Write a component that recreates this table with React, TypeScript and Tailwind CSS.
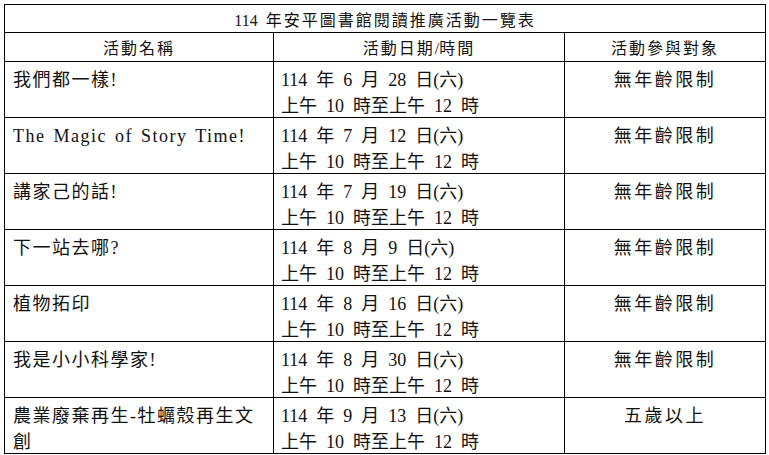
import type { ReactNode } from 'react';

const rows = [
  { name: '我們都一樣!', date: '114 年 6 月 28 日(六)', who: '無年齡限制' },
  { name: 'The Magic of Story Time!', date: '114 年 7 月 12 日(六)', who: '無年齡限制' },
  { name: '講家己的話!', date: '114 年 7 月 19 日(六)', who: '無年齡限制' },
  { name: '下一站去哪?', date: '114 年 8 月 9 日(六)', who: '無年齡限制' },
  { name: '植物拓印', date: '114 年 8 月 16 日(六)', who: '無年齡限制' },
  { name: '我是小小科學家!', date: '114 年 8 月 30 日(六)', who: '無年齡限制' },
  { name: '農業廢棄再生-牡蠣殼再生文\n創', date: '114 年 9 月 13 日(六)', who: '五歲以上' },
];

// serif latin runs; line-height 0 so they never stretch the line box
const latinName = "font-['Liberation_Serif','Noto_Sans_CJK_TC',serif] text-[18px] leading-[0] [word-spacing:2px]";
const latinDate = "font-['Liberation_Serif','Noto_Sans_CJK_TC',serif] text-[18px] leading-[0] [word-spacing:4.5px]";
const latinHead = "font-['Liberation_Serif','Noto_Sans_CJK_TC',serif] text-[16px] leading-[0] tracking-normal [word-spacing:4px]";

function Mixed({ text, latin }: { text: string; latin: string }) {
  const out: ReactNode[] = [];
  text.split('\n').forEach((line, li) => {
    if (li > 0) out.push(<br key={'br' + li} />);
    line.split(/([\x20-\x7e]+)/).forEach((p, i) => {
      if (!p) return;
      if (/^[\x20-\x7e]+$/.test(p)) {
        out.push(
          <span key={li + '-' + i} className={latin}>
            {p}
          </span>
        );
      } else {
        out.push(p);
      }
    });
  });
  return <>{out}</>;
}

export default function App() {
  return (
    <div className="min-h-screen bg-white p-1 font-['Noto_Sans_CJK_TC','Noto_Sans_CJK_SC',sans-serif] text-[#111]">
      <table className="table-fixed border-collapse w-[761px]">
        <colgroup>
          <col className="w-[269px]" />
          <col className="w-[291px]" />
          <col className="w-[201px]" />
        </colgroup>
        <tbody>
          <tr>
            <td colSpan={3} className="h-[28px] border border-black p-0 text-center text-[16px] leading-[20px] tracking-[2px]">
              <Mixed text="114 年安平圖書館閱讀推廣活動一覽表" latin={latinHead} />
            </td>
          </tr>
          <tr>
            {['活動名稱', '活動日期/時間', '活動參與對象'].map((h) => (
              <td key={h} className="h-[29px] border border-black p-0 text-center text-[16px] leading-[20px] tracking-[2px]">
                <Mixed text={h} latin={latinHead} />
              </td>
            ))}
          </tr>
          {rows.map((r, i) => (
            <tr key={i}>
              <td
                className={`${i > 4 ? 'h-[55px]' : 'h-[56px]'} border border-black pl-[8px] pr-1 pt-[3px] align-top text-[18px] leading-[26px] tracking-[1.5px]`}
              >
                <Mixed text={r.name} latin={latinName} />
              </td>
              <td className="border border-black pl-[7px] pt-[3px] align-top text-[18px] leading-[26px]">
                <Mixed text={r.date} latin={latinDate} />
                <br />
                <Mixed text="上午 10 時至上午 12 時" latin={latinDate} />
              </td>
              <td className="border border-black pt-[3px] align-top text-center text-[18px] leading-[26px] tracking-[2.5px]">
                {r.who}
              </td>
            </tr>
          ))}
        </tbody>
      </table>
    </div>
  );
}
